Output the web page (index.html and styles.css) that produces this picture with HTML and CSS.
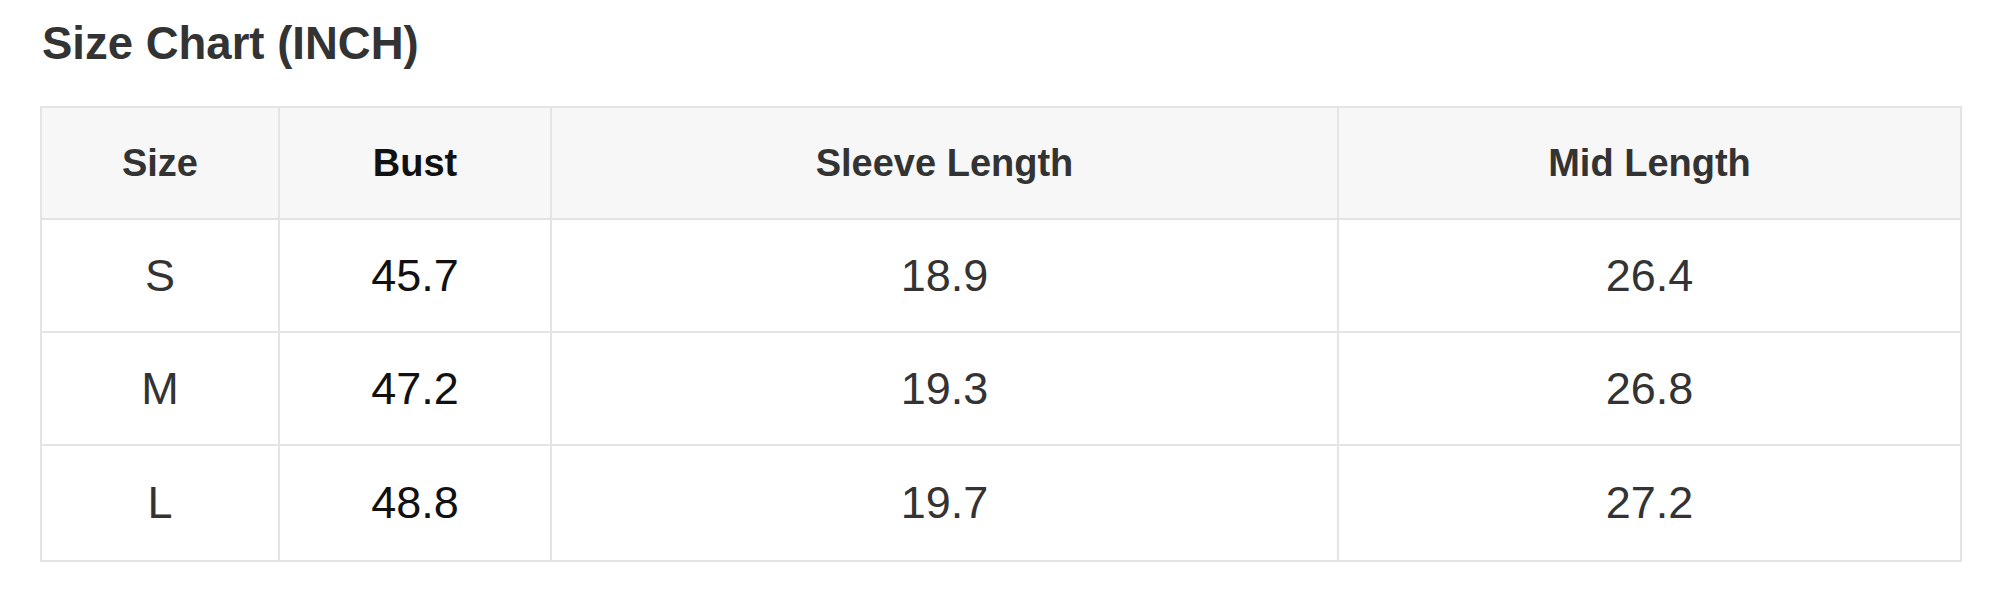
FILE: index.html
```html
<!DOCTYPE html>
<html>
<head>
<meta charset="utf-8">
<link rel="stylesheet" href="styles.css">
</head>
<body>
<div class="page">
  <h2 class="title">Size Chart (INCH)</h2>
  <table class="chart">
    <colgroup>
      <col class="c1"><col class="c2"><col class="c3"><col class="c4">
    </colgroup>
    <thead>
      <tr><th>Size</th><th class="dark">Bust</th><th>Sleeve Length</th><th>Mid Length</th></tr>
    </thead>
    <tbody>
      <tr><td>S</td><td class="dark">45.7</td><td>18.9</td><td>26.4</td></tr>
      <tr><td>M</td><td class="dark">47.2</td><td>19.3</td><td>26.8</td></tr>
      <tr class="last"><td>L</td><td class="dark">48.8</td><td>19.7</td><td>27.2</td></tr>
    </tbody>
  </table>
</div>
</body>
</html>
```

FILE: styles.css
```css
html, body {
  margin: 0;
  padding: 0;
  background: #ffffff;
}
.page {
  padding: 18px 40px 0 40px;
  font-family: "Liberation Sans", Arial, sans-serif;
}
.title {
  margin: 0 0 36px 2px;
  font-size: 45.5px;
  line-height: 52px;
  font-weight: bold;
  color: #333333;
}
.chart {
  border-collapse: collapse;
  table-layout: fixed;
  width: 1920px;
}
.c1 { width: 238px; }
.c2 { width: 272px; }
.c3 { width: 787px; }
.c4 { width: 623px; }
.chart th, .chart td {
  border: 2px solid #e4e4e4;
  text-align: center;
  vertical-align: middle;
  padding: 0;
  color: #333333;
}
.chart th {
  height: 110px;
  background: #f7f7f7;
  font-size: 38px;
  font-weight: bold;
}
.chart td {
  height: 111px;
  font-size: 45px;
  font-weight: normal;
}
.chart .last td {
  height: 114px;
}
.chart .dark {
  color: #111111;
}
```
